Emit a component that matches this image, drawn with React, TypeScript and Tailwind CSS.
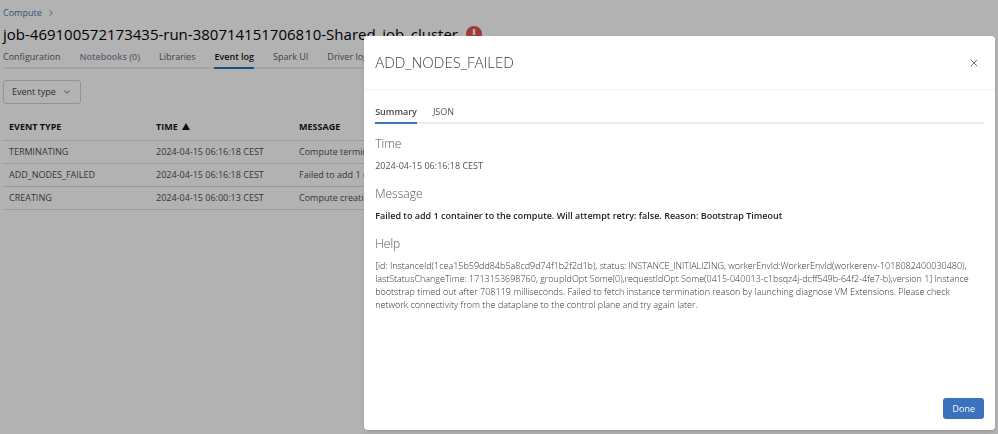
import React, { useState } from 'react';
import { ChevronDown, ChevronRight, X } from 'lucide-react';

const tabs = ['Configuration', 'Notebooks (0)', 'Libraries', 'Event log', 'Spark UI', 'Driver logs'];

const events = [
  { type: 'TERMINATING', time: '2024-04-15 06:16:18 CEST', message: 'Compute terminated' },
  { type: 'ADD_NODES_FAILED', time: '2024-04-15 06:16:18 CEST', message: 'Failed to add 1 container' },
  { type: 'CREATING', time: '2024-04-15 06:00:13 CEST', message: 'Compute creation' },
];

function tabClass(name: string) {
  if (name === 'Event log') {
    return 'border-[#2272b4] text-[#11171c] font-semibold';
  }
  if (name === 'Notebooks (0)') {
    return 'border-transparent text-[#8592a3] font-semibold';
  }
  return 'border-transparent text-[#56626f] font-medium';
}

function ClusterPage() {
  return (
    <main className="px-[3px] pt-[7px]">
      <nav className="flex items-center gap-1 text-[9px] leading-3">
        <a href="#" className="text-[#4a78ae]">Compute</a>
        <ChevronRight className="h-2.5 w-2.5 text-[#5f6b78]" />
      </nav>
      <div className="mt-[3px] mb-px flex h-6 items-center gap-2">
        <h1 className="whitespace-nowrap text-[15px] leading-6 font-medium text-black">
          job-469100572173435-run-380714151706810-Shared_job_cluster
        </h1>
        <svg viewBox="0 0 16 16" className="h-4 w-4 shrink-0">
          <circle cx="8" cy="8" r="8" fill="#e5534b" />
          <path d="M6.8 3h2.4v6H6.8zM6.8 10.6h2.4V13H6.8z" fill="#fff" />
        </svg>
      </div>
      <div className="flex h-[22px] gap-[19px] border-b-2 border-[#ececf0] whitespace-nowrap">
        {tabs.map((tab) => (
          <button
            key={tab}
            type="button"
            className={`-mb-0.5 border-b-2 text-[9px] leading-5 ${tabClass(tab)}`}
          >
            {tab}
          </button>
        ))}
      </div>
      <button
        type="button"
        className="mt-[11px] flex h-6 items-center gap-1.5 rounded-[3px] border border-[#cdd5df] px-2 text-[9px] font-medium text-[#3a444f]"
      >
        Event type
        <ChevronDown className="h-2.5 w-2.5" />
      </button>
      <table className="mt-[11px] w-full table-fixed text-left text-[9px] text-[#4a5058]">
        <thead>
          <tr className="h-[25px] border-b border-[#d8dde6] text-[#11171c]">
            <th className="w-[147px] px-1.5 pb-0.5 font-bold">EVENT TYPE</th>
            <th className="w-[143px] px-1.5 pb-0.5 font-bold">
              <span className="flex items-center gap-1">
                TIME
                <svg viewBox="0 0 8 7" className="h-[7px] w-2">
                  <path d="M4 0l4 7H0z" fill="currentColor" />
                </svg>
              </span>
            </th>
            <th className="px-1.5 pb-0.5 font-bold">MESSAGE</th>
          </tr>
        </thead>
        <tbody>
          {events.map((event) => (
            <tr key={event.type} className="h-[23px] border-b border-[#d8dde6]">
              <td className="px-1.5">{event.type}</td>
              <td className="px-1.5">{event.time}</td>
              <td className="px-1.5">{event.message}</td>
            </tr>
          ))}
        </tbody>
      </table>
    </main>
  );
}

function EventDialog({ onClose }: { onClose: () => void }) {
  return (
    <div className="fixed inset-0 flex justify-end bg-black/30 pt-9 pr-[3px] pb-1">
      <div
        role="dialog"
        aria-labelledby="event-title"
        className="flex w-[63.4%] flex-col rounded bg-white text-[9px] text-[#555555] shadow-md"
      >
        <div className="flex h-[54px] shrink-0 items-center justify-between border-b border-[#f0f0f0] px-[11px]">
          <h2 id="event-title" className="text-[15px] font-light text-[#444444]">ADD_NODES_FAILED</h2>
          <button type="button" aria-label="Close" onClick={onClose} className="mr-1">
            <X className="h-3 w-3 text-[#777777]" />
          </button>
        </div>
        <div className="flex-1 px-[11px] pt-3">
          <div className="flex h-[22px] gap-4 border-b-2 border-[#ededed]">
            <button type="button" className="-mb-0.5 border-b-2 border-[#3a72bd] leading-5 font-semibold text-[#444444]">
              Summary
            </button>
            <button type="button" className="-mb-0.5 border-b-2 border-transparent leading-5 font-medium">
              JSON
            </button>
          </div>
          <h3 className="mt-[10px] text-xs leading-5 font-light">Time</h3>
          <p className="mt-[5px] leading-[13px]">2024-04-15 06:16:18 CEST</p>
          <h3 className="mt-3 text-xs leading-5 font-light">Message</h3>
          <p className="mt-[5px] leading-[13px] font-[650] text-[#222222]">
            Failed to add 1 container to the compute. Will attempt retry: false. Reason: Bootstrap Timeout
          </p>
          <h3 className="mt-3 text-xs leading-5 font-light">Help</h3>
          <p className="mt-[5px] leading-[13px] font-[330] text-[#333333]">
            [id: InstanceId(1cea15b59dd84b5a8cd9d74f1b2f2d1b), status: INSTANCE_INITIALIZING,
            workerEnvId:WorkerEnvId(workerenv-1018082400030480), lastStatusChangeTime: 1713153698760, groupIdOpt
            Some(0),requestIdOpt Some(0415-040013-c1bsqz4j-dcff549b-64f2-4fe7-b),version 1] Instance bootstrap timed out
            after 708119 milliseconds. Failed to fetch instance termination reason by launching diagnose VM Extensions.
            Please check network connectivity from the dataplane to the control plane and try again later.
          </p>
        </div>
        <div className="flex shrink-0 justify-end px-[11px] pb-[11px]">
          <button
            type="button"
            onClick={onClose}
            className="h-[21px] rounded-[3px] bg-[#3a72bd] px-[9px] text-[9px] font-medium text-white"
          >
            Done
          </button>
        </div>
      </div>
    </div>
  );
}

function App() {
  const [open, setOpen] = useState(true);

  return (
    <div className="min-h-screen bg-white font-['Open_Sans','Noto_Sans',sans-serif]">
      <ClusterPage />
      {open && <EventDialog onClose={() => setOpen(false)} />}
    </div>
  );
}

export default App;
